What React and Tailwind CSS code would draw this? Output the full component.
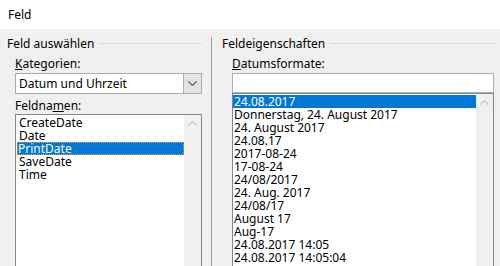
import React from "react";

function UpChevron() {
  return (
    <svg width="9" height="5" viewBox="0 0 9 5">
      <path d="M0.5 4.5 L4.5 0.5 L8.5 4.5" stroke="#c4c4c4" strokeWidth="1.2" fill="none" />
    </svg>
  );
}

function DownChevron() {
  return (
    <svg width="9" height="5" viewBox="0 0 9 5">
      <path d="M0.5 0.5 L4.5 4.5 L8.5 0.5" stroke="#5a5a5a" strokeWidth="1.1" fill="none" />
    </svg>
  );
}

function ListBox({ items, selected, focus, className }) {
  return (
    <div className={"flex border border-[#828790] bg-white " + className}>
      <div className="flex-1 flex flex-col pt-[1px] min-w-0">
        {items.map((it, i) => (
          <div
            key={i}
            className={
              "h-[13px] leading-[13px] whitespace-nowrap " +
              (i === selected
                ? "bg-[#0078d7] text-white " + (focus ? "ml-[1px] pl-[1px] outline-1 outline-dotted outline-[#e8a040] -outline-offset-1" : "pl-[1px]")
                : focus
                ? "pl-[2px] ml-[1px]"
                : "pl-[1px]")
            }
          >
            {it}
          </div>
        ))}
      </div>
      <div className="w-[17px] bg-[#f0f0f0] flex flex-col items-center">
        <div className="h-[17px] flex items-center justify-center">
          <UpChevron />
        </div>
      </div>
    </div>
  );
}

export default function App() {
  const fields = ["CreateDate", "Date", "PrintDate", "SaveDate", "Time"];
  const formats = [
    "24.08.2017",
    "Donnerstag, 24. August 2017",
    "24. August 2017",
    "24.08.17",
    "2017-08-24",
    "17-08-24",
    "24/08/2017",
    "24. Aug. 2017",
    "24/08/17",
    "August 17",
    "Aug-17",
    "24.08.2017 14:05",
    "24.08.2017 14:05:04",
  ];
  return (
    <div className="w-[500px] h-[266px] overflow-hidden bg-[#f0f0f0] font-['Noto_Sans',sans-serif] text-[12px] leading-[13px] text-black">
      <div className="h-[29px] bg-white pl-[8px] flex items-center">Feld</div>
      <div className="flex h-[237px]">
        {/* left */}
        <div className="w-[202px] pl-[7px] pt-[8px] flex flex-col">
          <div className="flex items-center h-[13px]">
            <span className="whitespace-nowrap">Feld auswählen</span>
            <div className="flex-1 h-px bg-[#dcdcdc] ml-[5px]" />
          </div>
          <div className="pl-[8px] flex flex-col flex-1">
            <div className="mt-[7px] h-[13px]">
              <u>K</u>ategorien:
            </div>
            <div className="mt-[3px] h-[21px] flex border border-[#adadad] bg-white">
              <div className="flex-1 flex items-center pl-[3px]">Datum und Uhrzeit</div>
              <div className="w-[18px] bg-[#e3e3e3] border-l border-[#adadad] flex items-center justify-center">
                <DownChevron />
              </div>
            </div>
            <div className="mt-[5px] h-[13px]">
              Feldna<u>m</u>en:
            </div>
            <ListBox items={fields} selected={2} focus className="mt-[2px] flex-1 -mb-[20px]" />
          </div>
        </div>
        {/* divider */}
        <div className="ml-[9px] mt-[8px] w-px bg-[#a0a0a0]" />
        {/* right */}
        <div className="w-[283px] pl-[10px] pt-[8px] flex flex-col">
          <div className="flex items-center h-[13px]">
            <span className="whitespace-nowrap">Feldeigenschaften</span>
            <div className="flex-1 h-px bg-[#dcdcdc] ml-[5px]" />
          </div>
          <div className="pl-[10px] pr-[1px] flex flex-col flex-1">
            <div className="mt-[7px] h-[13px]">
              <u>D</u>atumsformate:
            </div>
            <div className="mt-[3px] h-[20px] border border-[#adadad] bg-white" />
            <ListBox items={formats} selected={0} className="flex-1 -mb-[20px]" />
          </div>
        </div>
      </div>
    </div>
  );
}
